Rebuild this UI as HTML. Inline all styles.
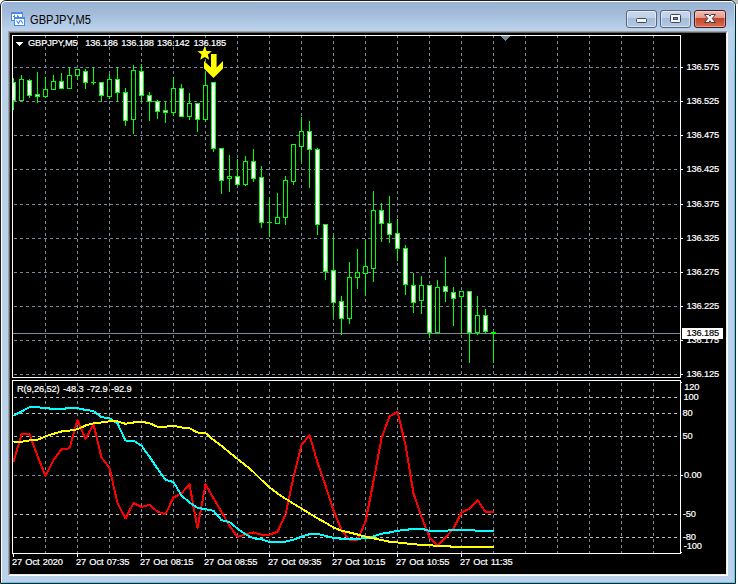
<!DOCTYPE html>
<html><head><meta charset="utf-8"><title>GBPJPY,M5</title>
<style>
html,body{margin:0;padding:0;background:#fff;}
body{width:738px;height:584px;position:relative;overflow:hidden;font-family:"Liberation Sans",sans-serif;}
#win{position:absolute;left:0;top:0;width:734px;height:582px;border:1px solid #1c1c1c;border-radius:6px 6px 0 0;background:#b9d1ea;overflow:hidden;}
#cap{position:absolute;left:0;top:0;width:734px;height:30px;background:linear-gradient(#98b3d3 0,#a2bbd9 40%,#bcd4ed 100%);}
#hl{position:absolute;left:0;top:0;width:733px;height:581px;border-left:1px solid #fff;border-top:1px solid #fff;border-right:1px solid #38d8f8;border-bottom:1px solid #38d8f8;border-radius:5px 5px 0 0;box-sizing:content-box;width:732px;height:580px;}
#edge{position:absolute;left:8px;top:31px;width:716px;height:541px;border:2px solid;border-color:#a0a0a0 #fff #fff #a0a0a0;background:#000;}
#edge2{position:absolute;left:9px;top:32px;width:716px;height:541px;border:1px solid;border-color:#646464 #e8e8e8 #e8e8e8 #646464;}
#ttl{position:absolute;left:29.5px;top:13px;font-size:12px;line-height:14px;color:#000;white-space:nowrap;transform-origin:0 0;transform:scaleX(0.925);}
.t{position:absolute;font-size:9.3px;line-height:9px;white-space:pre;margin-top:-0.6px;letter-spacing:-0.15px;word-spacing:0.9px;-webkit-text-stroke:0.2px currentColor;}
.btn{position:absolute;top:10px;width:29px;height:16px;border:1px solid #56657d;border-radius:3px;box-shadow:inset 0 0 0 1px rgba(255,255,255,.5);background:linear-gradient(#c8d8ec 0,#bed1e8 44%,#a5bddb 45%,#b3c8e2 100%);}
#bx{border-color:#4c1722;box-shadow:inset 0 0 0 1px rgba(255,255,255,.35);background:linear-gradient(#efbcb0 0,#e29a8b 44%,#c2432a 45%,#d4704f 100%);}
</style></head><body>
<div style="position:absolute;left:730px;top:0;width:8px;height:4px;background:#bdbdbd"></div>
<div id="win"><div id="cap"></div><div id="hl"></div></div>
<div style="position:absolute;left:734px;top:4px;width:1px;height:70px;background:linear-gradient(#b4ecfc,#38d8f8)"></div><div id="edge"></div><div id="edge2"></div>
<svg width="18" height="18" viewBox="9 10 18 18" style="position:absolute;left:9px;top:10px" shape-rendering="crispEdges">
<rect x="11" y="12" width="12" height="9" fill="#4a86ff"/>
<rect x="12" y="14" width="10" height="6" fill="#fff"/>
<path d="M11.500 12.500H22.500V20.500H11.500Z" fill="none" stroke="#3f9a6a" stroke-dasharray="1 2" opacity=".8"/>
<path d="M13 16.500h2M14 15.500h1M17 15.500h1M17 16.500h2M18 17.500h2" stroke="#4a86ff"/>
<rect x="14" y="17" width="11" height="9" fill="#4a86ff"/>
<rect x="15" y="19" width="9" height="6" fill="#fff"/>
<path d="M14.500 17.500H24.500V25.500H14.500Z" fill="none" stroke="#3f9a6a" stroke-dasharray="1 2" opacity=".8"/>
<polyline points="16.500,20.500 18.500,23.500 20,20.500 21,20.500 22.800,23.500" fill="none" stroke="#4a86ff" stroke-width="1.100" shape-rendering="auto"/>
</svg>
<div id="ttl">GBPJPY,M5</div>
<div class="btn" style="left:626px"></div>
<div class="btn" style="left:660px"></div>
<div class="btn" id="bx" style="left:694px;width:30px"></div>
<svg width="110" height="24" viewBox="620 8 110 24" style="position:absolute;left:620px;top:8px">
<rect x="636.5" y="18.500" width="10" height="4" rx="1" fill="#f4f4f0" stroke="#3f4658"/>
<rect x="670.5" y="14.500" width="10" height="8" rx="1" fill="#f6f6f4" stroke="#3f4658"/>
<rect x="673.5" y="17.500" width="4" height="2" fill="#6f8fc4" stroke="#3f4658"/>
<path d="M704.500 14.500L708.800 14.500L710 16.200L711.200 14.500L715.500 14.500L712.200 18.500L715.500 22.500L711.200 22.500L710 20.800L708.800 22.500L704.500 22.500L707.800 18.500Z" fill="#f6f6f6" stroke="#44384a" stroke-linejoin="round"/>
</svg>
<svg width="738" height="584" viewBox="0 0 738 584" shape-rendering="crispEdges" style="position:absolute;left:0;top:0"><rect x="10" y="33" width="716" height="541" fill="#000"/><line x1="45.5" y1="35" x2="45.5" y2="553" stroke="#778899" stroke-dasharray="3 3"/><line x1="77.5" y1="35" x2="77.5" y2="553" stroke="#778899" stroke-dasharray="3 3"/><line x1="109.5" y1="35" x2="109.5" y2="553" stroke="#778899" stroke-dasharray="3 3"/><line x1="141.5" y1="35" x2="141.5" y2="553" stroke="#778899" stroke-dasharray="3 3"/><line x1="173.5" y1="35" x2="173.5" y2="553" stroke="#778899" stroke-dasharray="3 3"/><line x1="205.5" y1="35" x2="205.5" y2="553" stroke="#778899" stroke-dasharray="3 3"/><line x1="237.5" y1="35" x2="237.5" y2="553" stroke="#778899" stroke-dasharray="3 3"/><line x1="269.5" y1="35" x2="269.5" y2="553" stroke="#778899" stroke-dasharray="3 3"/><line x1="301.5" y1="35" x2="301.5" y2="553" stroke="#778899" stroke-dasharray="3 3"/><line x1="333.5" y1="35" x2="333.5" y2="553" stroke="#778899" stroke-dasharray="3 3"/><line x1="365.5" y1="35" x2="365.5" y2="553" stroke="#778899" stroke-dasharray="3 3"/><line x1="397.5" y1="35" x2="397.5" y2="553" stroke="#778899" stroke-dasharray="3 3"/><line x1="429.5" y1="35" x2="429.5" y2="553" stroke="#778899" stroke-dasharray="3 3"/><line x1="461.5" y1="35" x2="461.5" y2="553" stroke="#778899" stroke-dasharray="3 3"/><line x1="493.5" y1="35" x2="493.5" y2="553" stroke="#778899" stroke-dasharray="3 3"/><line x1="525.5" y1="35" x2="525.5" y2="553" stroke="#778899" stroke-dasharray="3 3"/><line x1="557.5" y1="35" x2="557.5" y2="553" stroke="#778899" stroke-dasharray="3 3"/><line x1="589.5" y1="35" x2="589.5" y2="553" stroke="#778899" stroke-dasharray="3 3"/><line x1="621.5" y1="35" x2="621.5" y2="553" stroke="#778899" stroke-dasharray="3 3"/><line x1="653.5" y1="35" x2="653.5" y2="553" stroke="#778899" stroke-dasharray="3 3"/><line x1="14" y1="67.5" x2="680" y2="67.5" stroke="#778899" stroke-dasharray="3 3"/><rect x="681" y="67" width="2" height="1" fill="#fff"/><line x1="14" y1="101.5" x2="680" y2="101.5" stroke="#778899" stroke-dasharray="3 3"/><rect x="681" y="101" width="2" height="1" fill="#fff"/><line x1="14" y1="135.5" x2="680" y2="135.5" stroke="#778899" stroke-dasharray="3 3"/><rect x="681" y="135" width="2" height="1" fill="#fff"/><line x1="14" y1="169.5" x2="680" y2="169.5" stroke="#778899" stroke-dasharray="3 3"/><rect x="681" y="169" width="2" height="1" fill="#fff"/><line x1="14" y1="204.5" x2="680" y2="204.5" stroke="#778899" stroke-dasharray="3 3"/><rect x="681" y="204" width="2" height="1" fill="#fff"/><line x1="14" y1="238.5" x2="680" y2="238.5" stroke="#778899" stroke-dasharray="3 3"/><rect x="681" y="238" width="2" height="1" fill="#fff"/><line x1="14" y1="272.5" x2="680" y2="272.5" stroke="#778899" stroke-dasharray="3 3"/><rect x="681" y="272" width="2" height="1" fill="#fff"/><line x1="14" y1="306.5" x2="680" y2="306.5" stroke="#778899" stroke-dasharray="3 3"/><rect x="681" y="306" width="2" height="1" fill="#fff"/><line x1="14" y1="340.5" x2="680" y2="340.5" stroke="#778899" stroke-dasharray="3 3"/><rect x="681" y="340" width="2" height="1" fill="#fff"/><line x1="14" y1="374.5" x2="680" y2="374.5" stroke="#778899" stroke-dasharray="3 3"/><rect x="681" y="374" width="2" height="1" fill="#fff"/><line x1="14" y1="397.5" x2="680" y2="397.5" stroke="#c0c0c0" stroke-dasharray="3 3"/><line x1="14" y1="413.5" x2="680" y2="413.5" stroke="#c0c0c0" stroke-dasharray="3 3"/><line x1="14" y1="436.5" x2="680" y2="436.5" stroke="#c0c0c0" stroke-dasharray="3 3"/><line x1="14" y1="514.5" x2="680" y2="514.5" stroke="#c0c0c0" stroke-dasharray="3 3"/><line x1="14" y1="537.5" x2="680" y2="537.5" stroke="#c0c0c0" stroke-dasharray="3 3"/><line x1="14" y1="475.5" x2="680" y2="475.5" stroke="#778899" stroke-dasharray="3 3"/><rect x="681" y="475" width="2" height="1" fill="#fff"/><rect x="681" y="382" width="1" height="1" fill="#fff"/><rect x="681" y="552" width="1" height="1" fill="#fff"/><rect x="10" y="378" width="672" height="2" fill="#000"/><rect x="13" y="333" width="668" height="1" fill="#778899"/><rect x="13" y="78" width="1" height="32" fill="#0f0"/><rect x="13" y="82" width="3" height="19" fill="#0f0"/><rect x="13" y="83" width="2" height="17" fill="#fff"/><rect x="21" y="75" width="1" height="26" fill="#0f0"/><rect x="19" y="79" width="5" height="22" fill="#0f0"/><rect x="20" y="80" width="3" height="20" fill="#000"/><rect x="29" y="79" width="1" height="19" fill="#0f0"/><rect x="27" y="80" width="5" height="16" fill="#0f0"/><rect x="28" y="81" width="3" height="14" fill="#fff"/><rect x="37" y="72" width="1" height="31" fill="#0f0"/><rect x="35" y="94" width="5" height="3" fill="#0f0"/><rect x="36" y="95" width="3" height="1" fill="#fff"/><rect x="45" y="77" width="1" height="21" fill="#0f0"/><rect x="43" y="89" width="5" height="8" fill="#0f0"/><rect x="44" y="90" width="3" height="6" fill="#000"/><rect x="53" y="75" width="1" height="15" fill="#0f0"/><rect x="51" y="81" width="5" height="9" fill="#0f0"/><rect x="52" y="82" width="3" height="7" fill="#000"/><rect x="61" y="73" width="1" height="16" fill="#0f0"/><rect x="59" y="81" width="5" height="8" fill="#0f0"/><rect x="60" y="82" width="3" height="6" fill="#fff"/><rect x="69" y="67" width="1" height="22" fill="#0f0"/><rect x="67" y="75" width="5" height="14" fill="#0f0"/><rect x="68" y="76" width="3" height="12" fill="#000"/><rect x="77" y="69" width="1" height="11" fill="#0f0"/><rect x="75" y="69" width="5" height="7" fill="#0f0"/><rect x="76" y="70" width="3" height="5" fill="#000"/><rect x="85" y="69" width="1" height="20" fill="#0f0"/><rect x="83" y="71" width="5" height="12" fill="#0f0"/><rect x="84" y="72" width="3" height="10" fill="#fff"/><rect x="93" y="67" width="1" height="18" fill="#0f0"/><rect x="91" y="82" width="5" height="1" fill="#0f0"/><rect x="101" y="82" width="1" height="20" fill="#0f0"/><rect x="99" y="82" width="5" height="14" fill="#0f0"/><rect x="100" y="83" width="3" height="12" fill="#fff"/><rect x="109" y="74" width="1" height="25" fill="#0f0"/><rect x="107" y="79" width="5" height="18" fill="#0f0"/><rect x="108" y="80" width="3" height="16" fill="#000"/><rect x="117" y="67" width="1" height="35" fill="#0f0"/><rect x="115" y="79" width="5" height="14" fill="#0f0"/><rect x="116" y="80" width="3" height="12" fill="#fff"/><rect x="125" y="88" width="1" height="38" fill="#0f0"/><rect x="123" y="92" width="5" height="29" fill="#0f0"/><rect x="124" y="93" width="3" height="27" fill="#fff"/><rect x="133" y="65" width="1" height="69" fill="#0f0"/><rect x="131" y="70" width="5" height="50" fill="#0f0"/><rect x="132" y="71" width="3" height="48" fill="#000"/><rect x="141" y="64" width="1" height="38" fill="#0f0"/><rect x="139" y="71" width="5" height="25" fill="#0f0"/><rect x="140" y="72" width="3" height="23" fill="#fff"/><rect x="149" y="92" width="1" height="29" fill="#0f0"/><rect x="147" y="95" width="5" height="7" fill="#0f0"/><rect x="148" y="96" width="3" height="5" fill="#fff"/><rect x="157" y="100" width="1" height="19" fill="#0f0"/><rect x="155" y="101" width="5" height="11" fill="#0f0"/><rect x="156" y="102" width="3" height="9" fill="#fff"/><rect x="165" y="101" width="1" height="22" fill="#0f0"/><rect x="163" y="110" width="5" height="3" fill="#0f0"/><rect x="164" y="111" width="3" height="1" fill="#fff"/><rect x="173" y="77" width="1" height="39" fill="#0f0"/><rect x="171" y="88" width="5" height="25" fill="#0f0"/><rect x="172" y="89" width="3" height="23" fill="#000"/><rect x="181" y="84" width="1" height="33" fill="#0f0"/><rect x="179" y="88" width="5" height="29" fill="#0f0"/><rect x="180" y="89" width="3" height="27" fill="#fff"/><rect x="189" y="93" width="1" height="27" fill="#0f0"/><rect x="187" y="103" width="5" height="14" fill="#0f0"/><rect x="188" y="104" width="3" height="12" fill="#000"/><rect x="197" y="103" width="1" height="29" fill="#0f0"/><rect x="195" y="103" width="5" height="17" fill="#0f0"/><rect x="196" y="104" width="3" height="15" fill="#fff"/><rect x="205" y="72" width="1" height="50" fill="#0f0"/><rect x="203" y="85" width="5" height="35" fill="#0f0"/><rect x="204" y="86" width="3" height="33" fill="#000"/><rect x="213" y="82" width="1" height="70" fill="#0f0"/><rect x="211" y="82" width="5" height="67" fill="#0f0"/><rect x="212" y="83" width="3" height="65" fill="#fff"/><rect x="221" y="148" width="1" height="46" fill="#0f0"/><rect x="219" y="148" width="5" height="33" fill="#0f0"/><rect x="220" y="149" width="3" height="31" fill="#fff"/><rect x="229" y="155" width="1" height="37" fill="#0f0"/><rect x="227" y="176" width="5" height="3" fill="#0f0"/><rect x="228" y="177" width="3" height="1" fill="#000"/><rect x="237" y="159" width="1" height="26" fill="#0f0"/><rect x="235" y="176" width="5" height="9" fill="#0f0"/><rect x="236" y="177" width="3" height="7" fill="#fff"/><rect x="245" y="156" width="1" height="30" fill="#0f0"/><rect x="243" y="161" width="5" height="24" fill="#0f0"/><rect x="244" y="162" width="3" height="22" fill="#000"/><rect x="253" y="149" width="1" height="33" fill="#0f0"/><rect x="251" y="161" width="5" height="18" fill="#0f0"/><rect x="252" y="162" width="3" height="16" fill="#fff"/><rect x="261" y="166" width="1" height="62" fill="#0f0"/><rect x="259" y="177" width="5" height="46" fill="#0f0"/><rect x="260" y="178" width="3" height="44" fill="#fff"/><rect x="269" y="198" width="1" height="39" fill="#0f0"/><rect x="267" y="222" width="5" height="1" fill="#0f0"/><rect x="277" y="193" width="1" height="31" fill="#0f0"/><rect x="275" y="217" width="5" height="7" fill="#0f0"/><rect x="276" y="218" width="3" height="5" fill="#000"/><rect x="285" y="176" width="1" height="49" fill="#0f0"/><rect x="283" y="180" width="5" height="38" fill="#0f0"/><rect x="284" y="181" width="3" height="36" fill="#000"/><rect x="293" y="144" width="1" height="41" fill="#0f0"/><rect x="291" y="144" width="5" height="38" fill="#0f0"/><rect x="292" y="145" width="3" height="36" fill="#000"/><rect x="301" y="117" width="1" height="45" fill="#0f0"/><rect x="299" y="131" width="5" height="16" fill="#0f0"/><rect x="300" y="132" width="3" height="14" fill="#000"/><rect x="309" y="121" width="1" height="67" fill="#0f0"/><rect x="307" y="131" width="5" height="19" fill="#0f0"/><rect x="308" y="132" width="3" height="17" fill="#fff"/><rect x="317" y="148" width="1" height="87" fill="#0f0"/><rect x="315" y="149" width="5" height="76" fill="#0f0"/><rect x="316" y="150" width="3" height="74" fill="#fff"/><rect x="325" y="224" width="1" height="56" fill="#0f0"/><rect x="323" y="224" width="5" height="48" fill="#0f0"/><rect x="324" y="225" width="3" height="46" fill="#fff"/><rect x="333" y="235" width="1" height="83" fill="#0f0"/><rect x="331" y="270" width="5" height="33" fill="#0f0"/><rect x="332" y="271" width="3" height="31" fill="#fff"/><rect x="341" y="296" width="1" height="39" fill="#0f0"/><rect x="339" y="301" width="5" height="18" fill="#0f0"/><rect x="340" y="302" width="3" height="16" fill="#fff"/><rect x="349" y="262" width="1" height="62" fill="#0f0"/><rect x="347" y="277" width="5" height="42" fill="#0f0"/><rect x="348" y="278" width="3" height="40" fill="#000"/><rect x="357" y="249" width="1" height="40" fill="#0f0"/><rect x="355" y="272" width="5" height="6" fill="#0f0"/><rect x="356" y="273" width="3" height="4" fill="#000"/><rect x="365" y="240" width="1" height="56" fill="#0f0"/><rect x="363" y="266" width="5" height="8" fill="#0f0"/><rect x="364" y="267" width="3" height="6" fill="#000"/><rect x="373" y="191" width="1" height="91" fill="#0f0"/><rect x="371" y="210" width="5" height="59" fill="#0f0"/><rect x="372" y="211" width="3" height="57" fill="#000"/><rect x="381" y="203" width="1" height="39" fill="#0f0"/><rect x="379" y="210" width="5" height="14" fill="#0f0"/><rect x="380" y="211" width="3" height="12" fill="#fff"/><rect x="389" y="196" width="1" height="47" fill="#0f0"/><rect x="387" y="223" width="5" height="12" fill="#0f0"/><rect x="388" y="224" width="3" height="10" fill="#fff"/><rect x="397" y="219" width="1" height="42" fill="#0f0"/><rect x="395" y="233" width="5" height="16" fill="#0f0"/><rect x="396" y="234" width="3" height="14" fill="#fff"/><rect x="405" y="245" width="1" height="50" fill="#0f0"/><rect x="403" y="248" width="5" height="37" fill="#0f0"/><rect x="404" y="249" width="3" height="35" fill="#fff"/><rect x="413" y="273" width="1" height="40" fill="#0f0"/><rect x="411" y="285" width="5" height="18" fill="#0f0"/><rect x="412" y="286" width="3" height="16" fill="#fff"/><rect x="421" y="276" width="1" height="38" fill="#0f0"/><rect x="419" y="285" width="5" height="16" fill="#0f0"/><rect x="420" y="286" width="3" height="14" fill="#000"/><rect x="429" y="285" width="1" height="53" fill="#0f0"/><rect x="427" y="285" width="5" height="48" fill="#0f0"/><rect x="428" y="286" width="3" height="46" fill="#fff"/><rect x="437" y="280" width="1" height="53" fill="#0f0"/><rect x="435" y="287" width="5" height="46" fill="#0f0"/><rect x="436" y="288" width="3" height="44" fill="#000"/><rect x="445" y="257" width="1" height="45" fill="#0f0"/><rect x="443" y="286" width="5" height="6" fill="#0f0"/><rect x="444" y="287" width="3" height="4" fill="#fff"/><rect x="453" y="287" width="1" height="39" fill="#0f0"/><rect x="451" y="292" width="5" height="7" fill="#0f0"/><rect x="452" y="293" width="3" height="5" fill="#fff"/><rect x="461" y="291" width="1" height="43" fill="#0f0"/><rect x="459" y="291" width="5" height="6" fill="#0f0"/><rect x="460" y="292" width="3" height="4" fill="#000"/><rect x="469" y="291" width="1" height="72" fill="#0f0"/><rect x="467" y="291" width="5" height="42" fill="#0f0"/><rect x="468" y="292" width="3" height="40" fill="#fff"/><rect x="477" y="296" width="1" height="39" fill="#0f0"/><rect x="475" y="315" width="5" height="18" fill="#0f0"/><rect x="476" y="316" width="3" height="16" fill="#000"/><rect x="485" y="309" width="1" height="25" fill="#0f0"/><rect x="483" y="315" width="5" height="17" fill="#0f0"/><rect x="484" y="316" width="3" height="15" fill="#fff"/><rect x="493" y="331" width="1" height="32" fill="#0f0"/><rect x="491" y="332" width="5" height="2" fill="#0f0"/><polygon points="211,54 216.600,54 216.600,67.5 223,61 223,68.5 213.5,78 204,68.5 204,61 211,67.5" fill="#ff0" shape-rendering="auto"/><polygon points="204.7,46.0 206.6,50.9 211.9,51.3 207.8,54.6 209.2,59.7 204.7,56.9 200.2,59.7 201.6,54.6 197.5,51.3 202.8,50.9" fill="#ff0" shape-rendering="auto"/><polygon points="501,36 510,36 505.5,41" fill="#778899"/><clipPath id="subclip"><rect x="13" y="381" width="667" height="172"/></clipPath><g clip-path="url(#subclip)"><polyline points="13.5,461.7 21.5,434.5 29.5,434.2 37.5,455.8 45.5,475.8 53.5,460.0 61.5,449.2 69.5,448.3 77.5,420.0 85.5,439.2 93.5,424.2 101.5,457.5 109.5,468.0 117.5,503.3 125.5,518.3 133.5,503.0 141.5,507.0 149.5,504.7 157.5,511.7 165.5,514.2 173.5,497.5 181.5,493.3 189.5,484.5 197.5,528.3 205.5,484.2 213.5,498.3 221.5,512.0 229.5,525.8 237.5,537.0 245.5,534.2 253.5,532.5 261.5,534.7 269.5,534.7 277.5,531.7 285.5,514.5 293.5,477.0 301.5,445.0 309.5,435.0 317.5,462.5 325.5,485.5 333.5,510.5 341.5,530.0 349.5,540.0 357.5,540.0 365.5,521.7 373.5,481.5 381.5,438.3 389.5,416.3 397.5,411.7 405.5,445.0 413.5,493.5 421.5,516.7 429.5,537.5 437.5,545.5 445.5,537.5 453.5,528.3 461.5,512.5 469.5,508.7 477.5,500.0 485.5,512.0 493.5,512.0" fill="none" stroke="#f00" stroke-width="2" stroke-linejoin="round"/><polyline points="13.5,415.8 21.5,411.5 29.5,407.2 37.5,407.2 45.5,408.1 53.5,408.9 61.5,408.9 69.5,408.1 77.5,408.1 85.5,410.0 93.5,411.0 101.5,417.3 109.5,418.1 117.5,423.5 125.5,440.5 133.5,440.5 141.5,445.8 149.5,456.7 157.5,468.7 165.5,479.7 173.5,482.1 181.5,495.5 189.5,502.5 197.5,507.8 205.5,509.2 213.5,510.8 221.5,520.2 229.5,522.0 237.5,528.7 245.5,534.2 253.5,538.3 261.5,539.2 269.5,542.0 277.5,542.0 285.5,541.7 293.5,539.7 301.5,536.7 309.5,534.2 317.5,533.8 325.5,535.8 333.5,538.0 341.5,538.7 349.5,538.7 357.5,538.7 365.5,538.3 373.5,536.3 381.5,533.8 389.5,532.5 397.5,530.8 405.5,530.0 413.5,528.7 421.5,528.7 429.5,530.8 437.5,530.8 445.5,530.8 453.5,530.0 461.5,529.7 469.5,529.7 477.5,530.8 485.5,530.8 493.5,530.8" fill="none" stroke="#0ff" stroke-width="2" stroke-linejoin="round"/><polyline points="13.5,442.0 21.5,441.7 29.5,440.4 37.5,439.8 45.5,436.3 53.5,433.8 61.5,431.5 69.5,430.6 77.5,429.2 85.5,425.5 93.5,423.3 101.5,422.5 109.5,421.3 117.5,421.3 125.5,423.8 133.5,422.5 141.5,421.7 149.5,423.3 157.5,426.7 165.5,426.7 173.5,425.8 181.5,427.5 189.5,428.3 197.5,432.5 205.5,433.0 213.5,440.0 221.5,445.8 229.5,452.5 237.5,459.0 245.5,465.2 253.5,472.0 261.5,480.0 269.5,487.3 277.5,493.5 285.5,498.7 293.5,503.7 301.5,508.5 309.5,513.5 317.5,518.3 325.5,522.7 333.5,527.5 341.5,530.8 349.5,532.5 357.5,534.5 365.5,536.7 373.5,538.3 381.5,540.0 389.5,541.7 397.5,542.5 405.5,543.3 413.5,544.2 421.5,545.0 429.5,545.3 437.5,545.8 445.5,546.2 453.5,546.7 461.5,546.7 469.5,546.7 477.5,546.7 485.5,546.7 493.5,546.7" fill="none" stroke="#ff0" stroke-width="2" stroke-linejoin="round"/></g><path d="M12.5 35.5H680.5V377.5H12.5Z M12.5 380.5H680.5V553.5H12.5Z" fill="none" stroke="#fff"/><rect x="13" y="554" width="1" height="3" fill="#fff"/><rect x="77" y="554" width="1" height="3" fill="#fff"/><rect x="141" y="554" width="1" height="3" fill="#fff"/><rect x="205" y="554" width="1" height="3" fill="#fff"/><rect x="269" y="554" width="1" height="3" fill="#fff"/><rect x="333" y="554" width="1" height="3" fill="#fff"/><rect x="397" y="554" width="1" height="3" fill="#fff"/><rect x="461" y="554" width="1" height="3" fill="#fff"/><polygon points="16,42 23,42 19.5,46" fill="#fff"/><rect x="682" y="328" width="41" height="11" fill="#fff"/></svg>
<span class="t" style="left:28px;top:40px;color:#fff;">GBPJPY,M5</span><span class="t" style="left:85.3px;top:40px;color:#fff;">136.186</span><span class="t" style="left:121.3px;top:40px;color:#fff;">136.188</span><span class="t" style="left:157px;top:40px;color:#fff;">136.142</span><span class="t" style="left:193.4px;top:40px;color:#fff;">136.185</span><span class="t" style="left:686.4px;top:64px;color:#fff;">136.575</span><span class="t" style="left:686.4px;top:98px;color:#fff;">136.525</span><span class="t" style="left:686.4px;top:132px;color:#fff;">136.475</span><span class="t" style="left:686.4px;top:166px;color:#fff;">136.425</span><span class="t" style="left:686.4px;top:201px;color:#fff;">136.375</span><span class="t" style="left:686.4px;top:235px;color:#fff;">136.325</span><span class="t" style="left:686.4px;top:269px;color:#fff;">136.275</span><span class="t" style="left:686.4px;top:303px;color:#fff;">136.225</span><span class="t" style="left:686.4px;top:337px;color:#fff;">136.175</span><span class="t" style="left:686.4px;top:371px;color:#fff;">136.125</span><span class="t" style="left:686.4px;top:330px;color:#000;">136.185</span><span class="t" style="left:684.2px;top:384px;color:#fff;">120</span><span class="t" style="left:683.4px;top:394px;color:#fff;">100</span><span class="t" style="left:682.6px;top:410px;color:#fff;">80</span><span class="t" style="left:682.6px;top:433px;color:#fff;">50</span><span class="t" style="left:684px;top:472px;color:#fff;">0.00</span><span class="t" style="left:682.8px;top:511px;color:#fff;">-50</span><span class="t" style="left:682.8px;top:534px;color:#fff;">-80</span><span class="t" style="left:683.7px;top:543px;color:#fff;">-100</span><span class="t" style="left:17px;top:386px;color:#fff;">R(9,26,52)</span><span class="t" style="left:63px;top:386px;color:#fff;">-48.3</span><span class="t" style="left:87px;top:386px;color:#fff;">-72.9</span><span class="t" style="left:111px;top:386px;color:#fff;">-92.9</span><span class="t" style="left:12px;top:559px;color:#fff;">27 Oct 2020</span><span class="t" style="left:76px;top:559px;color:#fff;">27 Oct 07:35</span><span class="t" style="left:140px;top:559px;color:#fff;">27 Oct 08:15</span><span class="t" style="left:204px;top:559px;color:#fff;">27 Oct 08:55</span><span class="t" style="left:268px;top:559px;color:#fff;">27 Oct 09:35</span><span class="t" style="left:332px;top:559px;color:#fff;">27 Oct 10:15</span><span class="t" style="left:396px;top:559px;color:#fff;">27 Oct 10:55</span><span class="t" style="left:460px;top:559px;color:#fff;">27 Oct 11:35</span>
</body></html>
